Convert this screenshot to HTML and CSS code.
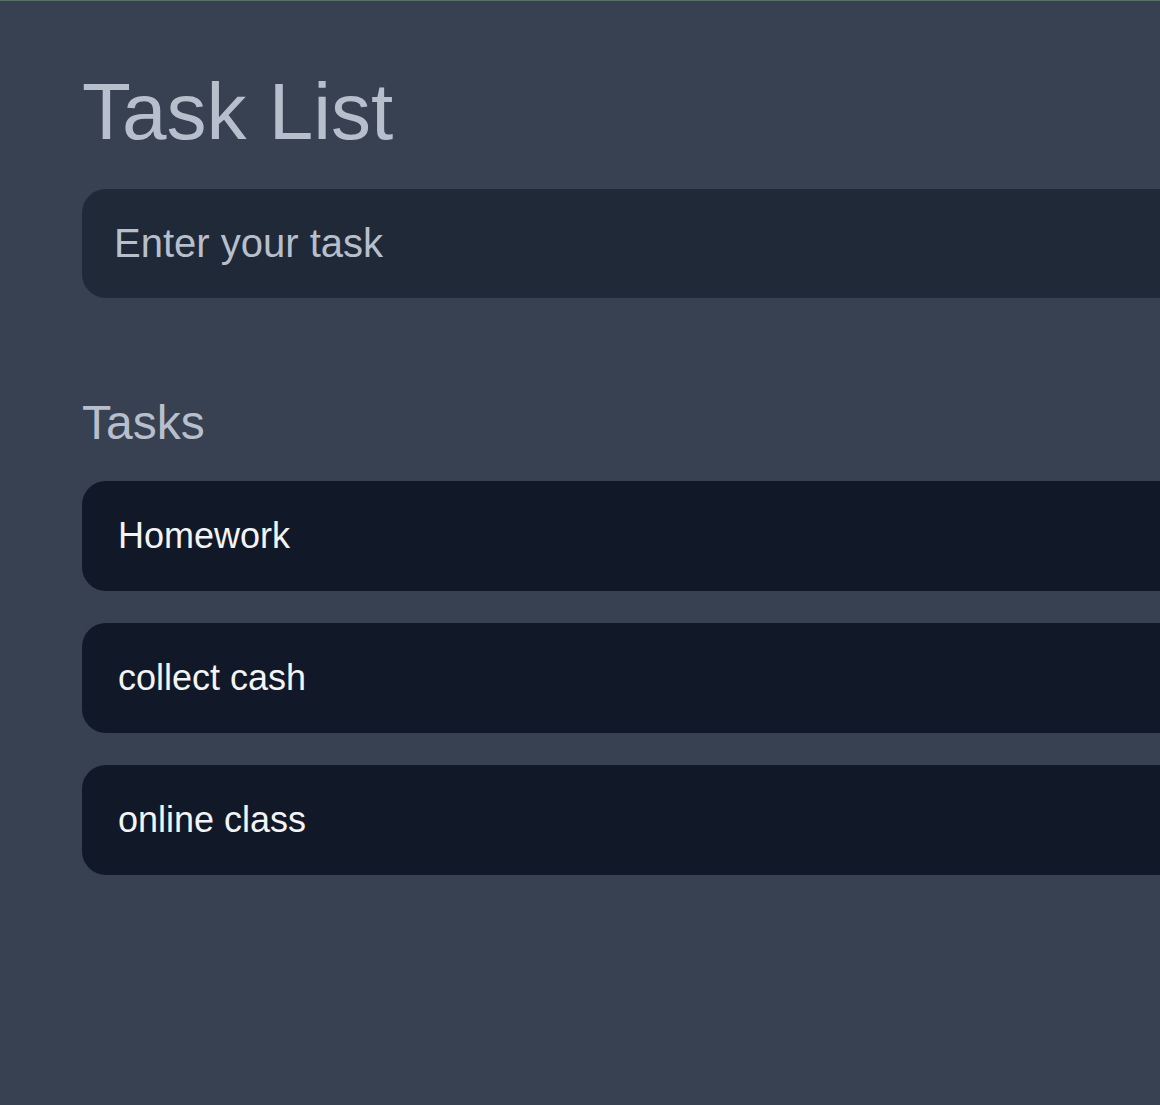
FILE: index.html
```html
<!DOCTYPE html>
<html lang="en">
<head>
<meta charset="utf-8">
<title>Task List</title>
<link rel="stylesheet" href="styles.css">
</head>
<body>
<main class="app">
  <h1 class="title">Task List</h1>
  <input class="task-input" type="text" placeholder="Enter your task" autofocus>
  <h2 class="subtitle">Tasks</h2>
  <ul class="task-list">
    <li class="task">Homework</li>
    <li class="task">collect cash</li>
    <li class="task">online class</li>
  </ul>
</main>
</body>
</html>
```
FILE: styles.css
```css
html {
  background: #374151;
}
body {
  margin: 0;
  min-height: 1104px;
  background: #374151;
  border-top: 1px solid #4b7a52;
  font-family: "Liberation Sans", Arial, sans-serif;
}
.app {
  padding: 65px 0 0 82px;
}
.title {
  margin: 0;
  font-size: 80px;
  line-height: 92px;
  font-weight: 400;
  color: #b8bfcc;
}
.task-input {
  display: block;
  box-sizing: border-box;
  margin: 31px 0 0;
  width: 100%;
  height: 109px;
  padding: 0 32px;
  border: none;
  outline: none;
  border-radius: 24px 0 0 24px;
  background: #1f2937;
  color: #e5e7eb;
  caret-color: #ffffff;
  font-family: "Liberation Sans", Arial, sans-serif;
  font-size: 40px;
}
.task-input::placeholder {
  color: #b8bfcc;
  opacity: 1;
}
.subtitle {
  margin: 97px 0 0;
  font-size: 48px;
  line-height: 55px;
  font-weight: 400;
  color: #b8bfcc;
}
.task-list {
  list-style: none;
  margin: 31px 0 0;
  padding: 0;
  display: flex;
  flex-direction: column;
  gap: 32px;
}
.task {
  box-sizing: border-box;
  width: 100%;
  height: 110px;
  padding: 34px 36px;
  border-radius: 24px 0 0 24px;
  background: #111827;
  color: #f3f4f6;
  font-size: 36px;
  line-height: 42px;
}
```
